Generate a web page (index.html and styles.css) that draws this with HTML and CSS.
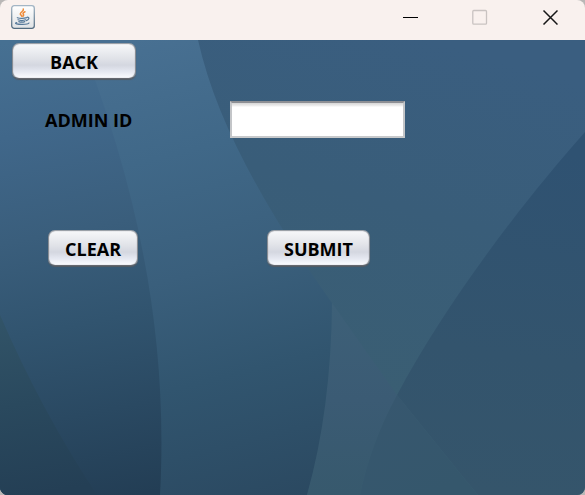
FILE: index.html
```html
<!DOCTYPE html>
<html lang="en">
<head>
<meta charset="utf-8">
<title>Admin</title>
<link rel="stylesheet" href="styles.css">
</head>
<body>
<div class="window">
  <header class="titlebar">
    <svg class="app-icon" viewBox="0 0 24 24" aria-hidden="true">
      <defs>
        <linearGradient id="tile" x1="0" y1="0" x2="0" y2="1"><stop offset="0" stop-color="#ffffff"/><stop offset="1" stop-color="#dfe2e5"/></linearGradient>
        <linearGradient id="rim" x1="0" y1="0" x2="0" y2="1"><stop offset="0" stop-color="#a3b6c5"/><stop offset="1" stop-color="#526b80"/></linearGradient>
      </defs>
      <rect x=".7" y=".7" width="22.6" height="22.6" rx="2.5" fill="url(#tile)" stroke="url(#rim)" stroke-width="1.3"/>
      <g fill="none" stroke-linecap="round">
        <path d="M12.300 4c1 2.200-3.300 3-3 5 .2 1.100 1.300 1.300 1.600 2.300M14 6.800c-1.700.8-2.500 1.700-1.700 2.500.6.700.3 1.300-.3 1.800" stroke="#ee8a38" stroke-width="1.500"/>
        <path d="M6.300 12.700c2.500.8 7 .7 9.500 0M7 14.800c2 .8 5.500.8 7.600 0M7.800 16.600c1.800.7 4.200.7 6 0M16 12.300c2.800-.6 2.500 2.200-.6 3.300" stroke="#56799a" stroke-width="1.200"/>
        <path d="M5.800 17.500c-4 1.100 1.500 2 5.700 1.900 3.600-.1 6-.6 6.500-1.500" stroke="#56799a" stroke-width="1.100"/>
      </g>
    </svg>
    <div class="window-controls">
      <button type="button" aria-label="Minimize"><svg viewBox="0 0 16 16"><path d="M1 8.500h15" stroke="#000"/></svg></button>
      <button type="button" aria-label="Maximize" disabled><svg viewBox="0 0 16 16"><rect x=".8" y="1.500" width="13.700" height="13.700" rx="1" fill="none" stroke="#c9c3c1" stroke-width="1.300"/></svg></button>
      <button type="button" aria-label="Close"><svg viewBox="0 0 16 16"><path d="M1.500 1.500l14 14M15.500 1.500l-14 14" stroke="#161616" stroke-width="1.500"/></svg></button>
    </div>
  </header>
  <main class="content">
    <svg class="backdrop" viewBox="0 40 585 455" preserveAspectRatio="none" aria-hidden="true">
      <defs>
        <linearGradient id="left" gradientUnits="userSpaceOnUse" x1="20" y1="40" x2="110" y2="500"><stop offset="0" stop-color="#467092"/><stop offset=".2" stop-color="#40678a"/><stop offset=".42" stop-color="#3a5e7c"/><stop offset=".62" stop-color="#31546f"/><stop offset="1" stop-color="#233e55"/></linearGradient>
        <linearGradient id="band" gradientUnits="userSpaceOnUse" x1="130" y1="40" x2="250" y2="510"><stop offset="0" stop-color="#487092"/><stop offset=".25" stop-color="#406888"/><stop offset=".5" stop-color="#3a5f7c"/><stop offset=".72" stop-color="#31556f"/><stop offset="1" stop-color="#2b4961"/></linearGradient>
        <linearGradient id="sky" gradientUnits="userSpaceOnUse" x1="430" y1="40" x2="330" y2="400"><stop offset="0" stop-color="#3a5e80"/><stop offset=".45" stop-color="#395d79"/><stop offset="1" stop-color="#3a5e72"/></linearGradient>
        <linearGradient id="right" gradientUnits="userSpaceOnUse" x1="550" y1="150" x2="500" y2="495"><stop offset="0" stop-color="#2f5272"/><stop offset=".6" stop-color="#33546d"/><stop offset="1" stop-color="#35556b"/></linearGradient>
        <linearGradient id="wedge" gradientUnits="userSpaceOnUse" x1="0" y1="303" x2="0" y2="495"><stop offset="0" stop-color="#3d6078"/><stop offset=".5" stop-color="#3b5b74"/><stop offset="1" stop-color="#37596d"/></linearGradient>
        <linearGradient id="corner" gradientUnits="userSpaceOnUse" x1="0" y1="315" x2="30" y2="495"><stop offset="0" stop-color="#325468"/><stop offset=".5" stop-color="#2a495e"/><stop offset="1" stop-color="#243f55"/></linearGradient>
        <linearGradient id="fold" gradientUnits="userSpaceOnUse" x1="380" y1="395" x2="430" y2="495"><stop offset="0" stop-color="#37576f"/><stop offset="1" stop-color="#35576c"/></linearGradient>
      </defs>
      <rect y="40" width="585" height="455" fill="url(#sky)"/>
      <path d="M585 132C520 205 445 305 397 395L463 477L478 495H585Z" fill="url(#right)"/>
      <path d="M332 303L397 395Q370 445 360 495H307Q331 410 332 303Z" fill="url(#wedge)"/>
      <path d="M397 395L463 477L478 495H360Q370 445 397 395Z" fill="url(#fold)"/>
      <path d="M0 40H198C216 120 262 204 332 303Q331 410 307 495H0Z" fill="url(#band)"/>
      <path d="M0 40H80C135 180 169 330 160 495H0Z" fill="url(#left)"/>
      <path d="M0 315Q42 412 97 495H0Z" fill="url(#corner)"/>
    </svg>
    <form class="login">
      <button class="push back" type="button">BACK</button>
      <div class="field">
        <label for="admin-id">ADMIN ID</label>
        <input id="admin-id" type="text">
      </div>
      <div class="actions">
        <div class="cell"><button class="push" type="reset">CLEAR</button></div>
        <button class="push" type="button">SUBMIT</button>
      </div>
    </form>
  </main>
</div>
</body>
</html>
```
FILE: styles.css
```css
* { box-sizing: border-box; }

body {
  margin: 0;
  background: #b9b7b6;
  font: 700 18px/24px "Open Sans", "Noto Sans", sans-serif;
  color: #000;
}

.window {
  display: flex;
  flex-direction: column;
  min-height: 100vh;
  overflow: hidden;
  border-radius: 8px;
}

.titlebar {
  display: flex;
  justify-content: space-between;
  height: 40px;
  padding-left: 11px;
  background: #f9f1ee;
}

.app-icon { width: 24px; height: 24px; margin-top: 5px; }

.window-controls { display: flex; }

.window-controls button {
  display: flex;
  align-items: center;
  justify-content: center;
  width: 70px;
  height: 34px;
  padding: 0;
  border: 0;
  background: none;
}

.window-controls svg { width: 16px; height: 16px; }

.content {
  position: relative;
  flex: 1;
}

.backdrop {
  position: absolute;
  inset: 0;
  width: 100%;
  height: 100%;
}

.login {
  position: relative;
  padding: 3px 12px;
}

.push {
  height: 36px;
  padding: 2px 16px 0;
  border: 1px solid;
  border-color: #9ba1a8 #888d94 #65686f;
  border-radius: 7px;
  background: linear-gradient(#f7f8fa, #e2e4e9 40%, #d4d7e0 62%, #e4e7f0 80%, #fbfcff);
  box-shadow: 0 1px 1px #555b63, inset 0 0 1px #85898f;
  font: inherit;
  color: inherit;
}

.back { display: block; width: 124px; }

.field,
.actions {
  display: grid;
  align-items: center;
}

.field {
  grid-template-columns: 185px 175px;
  margin: 22px 0 0 33px;
}

.field input {
  width: 100%;
  height: 37px;
  padding: 0 6px;
  border: 2px solid;
  border-color: #8d8f94 #c3c5c8 #c7c9cb;
  border-radius: 0;
  background: linear-gradient(#d5d5d5, #f0f0f0 3px, #fff 4px);
  font: inherit;
}

.actions {
  grid-template-columns: 219px max-content;
  margin: 92px 0 0 36px;
}
```
